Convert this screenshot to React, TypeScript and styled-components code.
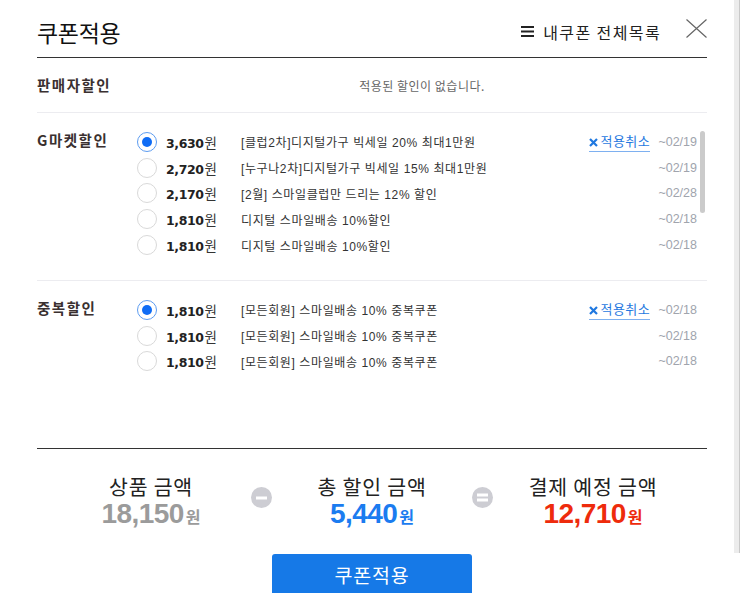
import React from "react";
import styled, { createGlobalStyle } from "styled-components";

const GlobalStyle = createGlobalStyle`
  html, body { margin: 0; padding: 0; background: #fff; }
  body { font-family: "Noto Sans CJK KR", "Noto Sans", sans-serif; color: #333; }
  * { box-sizing: border-box; }
`;

const KR = `"Liberation Sans", "Noto Sans CJK KR", sans-serif`;

const Page = styled.div`
  display: flex;
  align-items: flex-start;
  width: 741px;
`;

const Panel = styled.div`
  width: 734px;
  padding: 0 27px 0 37px;
`;

const EdgeStrip = styled.div`
  width: 6px;
  height: 553px;
  background: #ececec;
  border-right: 1px solid #c9c9c9;
`;

const Header = styled.div`
  display: flex;
  align-items: center;
  height: 58px;
  padding-top: 6px;
  border-bottom: 1px solid #333;
`;

const Title = styled.h1`
  margin: 0;
  font-size: 23px;
  font-weight: 400;
  color: #111;
  line-height: 28px;
  letter-spacing: -0.3px;
  flex: 1;
`;

const ListLink = styled.a`
  display: flex;
  align-items: center;
  gap: 9px;
  font-size: 16px;
  letter-spacing: 1.4px;
  color: #222;
  text-decoration: none;
  line-height: 20px;
`;

const CloseButton = styled.button`
  margin: -6px 0 0 25px;
  padding: 0;
  width: 21px;
  height: 19px;
  border: 0;
  background: none;
  display: flex;
`;

const Body = styled.div`
  height: 391px;
  border-bottom: 1px solid #333;
`;

const SellerRow = styled.div`
  display: flex;
  align-items: center;
  height: 55px;
  border-bottom: 1px solid #ececf0;
`;

const Label = styled.div`
  width: 100px;
  font-size: 14.5px;
  font-weight: 700;
  letter-spacing: 1.5px;
  color: #3a3030;
  line-height: 22px;
`;

const EmptyMsg = styled.div`
  flex: 1;
  text-align: center;
  font-size: 12px;
  letter-spacing: 0.5px;
  color: #666;
`;

const Section = styled.div<{ $last?: boolean }>`
  display: flex;
  align-items: flex-start;
  padding: 16px 0 ${(p) => (p.$last ? 0 : 22)}px;
  border-bottom: ${(p) => (p.$last ? "none" : "1px solid #ececf0")};
`;

const SectionLabel = styled(Label)`
  line-height: 22px;
`;

const CouponList = styled.div`
  flex: 1;
  display: flex;
  flex-direction: column;
`;

const ScrollTrack = styled.div`
  width: 5px;
  margin: 2px 2px 0 3px;
  align-self: stretch;
`;

const ScrollThumb = styled.div`
  width: 5px;
  height: 82px;
  border-radius: 3px;
  background: #cbcbcb;
`;

const Row = styled.div`
  display: flex;
  align-items: center;
  height: 25.8px;
`;

const Radio = styled.span<{ $checked?: boolean }>`
  width: 20px;
  height: 20px;
  border-radius: 50%;
  border: 1px solid ${(p) => (p.$checked ? "#5d9cf0" : "#d9d9d9")};
  display: flex;
  align-items: center;
  justify-content: center;
  margin-right: 9px;
  flex: none;
  &::after {
    content: "";
    display: ${(p) => (p.$checked ? "block" : "none")};
    width: 10px;
    height: 10px;
    border-radius: 50%;
    background: #0f6cf5;
  }
`;

const Amount = styled.span`
  width: 75px;
  flex: none;
  font-family: "DejaVu Sans", sans-serif;
  font-weight: 700;
  font-size: 12.5px;
  letter-spacing: -0.4px;
  color: #222;
  span {
    font-family: "Noto Sans CJK KR", sans-serif;
    font-weight: 400;
    font-size: 13.5px;
    letter-spacing: 0;
    color: #333;
    margin-left: 1px;
  }
`;

const Desc = styled.span`
  flex: 1;
  font-family: ${KR};
  font-size: 12px;
  letter-spacing: 0.6px;
  color: #333;
  white-space: nowrap;
`;

const Cancel = styled.a`
  display: flex;
  align-items: center;
  gap: 3px;
  font-family: ${KR};
  font-size: 13px;
  letter-spacing: 0.4px;
  color: #1f78e0;
  text-decoration: none;
  line-height: 18px;
  border-bottom: 1px solid #7eb0f0;
  margin: 2px 7px 0 0;
`;

const DateText = styled.span`
  width: 40px;
  text-align: right;
  font-family: "Liberation Sans", sans-serif;
  font-size: 12.5px;
  color: #a0a4ad;
`;

const Summary = styled.div`
  display: flex;
  justify-content: center;
  align-items: center;
  gap: 20px;
  padding-top: 25px;
`;

const SumCol = styled.div`
  width: 160px;
  text-align: center;
`;

const SumLabel = styled.div`
  font-size: 20.5px;
  line-height: 24px;
  color: #222;
  letter-spacing: 0.8px;
`;

const SumValue = styled.div<{ $color: string }>`
  font-family: "Liberation Sans", sans-serif;
  font-weight: 700;
  font-size: 28px;
  line-height: 31px;
  letter-spacing: -0.6px;
  color: ${(p) => p.$color};
  span {
    font-family: "Noto Sans CJK KR", sans-serif;
    font-size: 16px;
    letter-spacing: 0;
    margin-left: 2px;
  }
`;

const OpCircle = styled.span`
  width: 21px;
  height: 21px;
  border-radius: 50%;
  background: #cdcdd3;
  margin-bottom: 11px;
  display: flex;
  align-items: center;
  justify-content: center;
  flex: none;
`;

const ButtonWrap = styled.div`
  display: flex;
  justify-content: center;
  padding-top: 22px;
`;

const ApplyButton = styled.button`
  width: 200px;
  height: 40px;
  border: 0;
  border-radius: 3px 3px 0 0;
  background: #1679e7;
  color: #fff;
  font-family: "Noto Sans CJK KR", sans-serif;
  font-size: 19.5px;
  letter-spacing: 0.8px;
  padding: 0;
`;

type Coupon = { amount: string; desc: string; date: string; checked?: boolean };

const gmarket: Coupon[] = [
  { amount: "3,630", desc: "[클럽2차]디지털가구 빅세일 20% 최대1만원", date: "~02/19", checked: true },
  { amount: "2,720", desc: "[누구나2차]디지털가구 빅세일 15% 최대1만원", date: "~02/19" },
  { amount: "2,170", desc: "[2월] 스마일클럽만 드리는 12% 할인", date: "~02/28" },
  { amount: "1,810", desc: "디지털 스마일배송 10%할인", date: "~02/18" },
  { amount: "1,810", desc: "디지털 스마일배송 10%할인", date: "~02/18" },
];

const dup: Coupon[] = [
  { amount: "1,810", desc: "[모든회원] 스마일배송 10% 중복쿠폰", date: "~02/18", checked: true },
  { amount: "1,810", desc: "[모든회원] 스마일배송 10% 중복쿠폰", date: "~02/18" },
  { amount: "1,810", desc: "[모든회원] 스마일배송 10% 중복쿠폰", date: "~02/18" },
];

const CouponRow = ({ c }: { c: Coupon }) => (
  <Row>
    <Radio $checked={c.checked} />
    <Amount>
      {c.amount}
      <span>원</span>
    </Amount>
    <Desc>{c.desc}</Desc>
    {c.checked && (
      <Cancel>
        <svg width="9" height="9" viewBox="0 0 9 9">
          <path d="M1 1 L8 8 M8 1 L1 8" stroke="#1f78e0" strokeWidth="2.2" />
        </svg>
        적용취소
      </Cancel>
    )}
    <DateText>{c.date}</DateText>
  </Row>
);

export default function App() {
  return (
    <Page>
      <GlobalStyle />
      <Panel>
        <Header>
          <Title>쿠폰적용</Title>
          <ListLink>
            <svg width="13" height="11" viewBox="0 0 13 11">
              <rect x="0" y="0" width="13" height="2" fill="#222" />
              <rect x="0" y="4.5" width="13" height="2" fill="#222" />
              <rect x="0" y="9" width="13" height="2" fill="#222" />
            </svg>
            내쿠폰 전체목록
          </ListLink>
          <CloseButton aria-label="닫기">
            <svg width="21" height="19" viewBox="0 0 21 19">
              <path d="M0.5 0.5 L20.5 18.5 M20.5 0.5 L0.5 18.5" stroke="#666" strokeWidth="1.2" />
            </svg>
          </CloseButton>
        </Header>
        <Body>
          <SellerRow>
            <Label>판매자할인</Label>
            <EmptyMsg>적용된 할인이 없습니다.</EmptyMsg>
          </SellerRow>
          <Section>
            <SectionLabel>G마켓할인</SectionLabel>
            <CouponList>
              {gmarket.map((c, i) => (
                <CouponRow key={i} c={c} />
              ))}
            </CouponList>
            <ScrollTrack>
              <ScrollThumb />
            </ScrollTrack>
          </Section>
          <Section $last>
            <SectionLabel>중복할인</SectionLabel>
            <CouponList>
              {dup.map((c, i) => (
                <CouponRow key={i} c={c} />
              ))}
            </CouponList>
            <ScrollTrack />
          </Section>
        </Body>
        <Summary>
          <SumCol>
            <SumLabel>상품 금액</SumLabel>
            <SumValue $color="#9b9b9b">
              18,150<span>원</span>
            </SumValue>
          </SumCol>
          <OpCircle>
            <svg width="11" height="4" viewBox="0 0 11 4">
              <rect width="11" height="3" y="0.5" fill="#fff" />
            </svg>
          </OpCircle>
          <SumCol>
            <SumLabel>총 할인 금액</SumLabel>
            <SumValue $color="#1b7cf0">
              5,440<span>원</span>
            </SumValue>
          </SumCol>
          <OpCircle>
            <svg width="11" height="9" viewBox="0 0 11 9">
              <rect width="11" height="3" y="0.5" fill="#fff" />
              <rect width="11" height="3" y="5.5" fill="#fff" />
            </svg>
          </OpCircle>
          <SumCol>
            <SumLabel>결제 예정 금액</SumLabel>
            <SumValue $color="#ee2b0c">
              12,710<span>원</span>
            </SumValue>
          </SumCol>
        </Summary>
        <ButtonWrap>
          <ApplyButton>쿠폰적용</ApplyButton>
        </ButtonWrap>
      </Panel>
      <EdgeStrip />
    </Page>
  );
}
